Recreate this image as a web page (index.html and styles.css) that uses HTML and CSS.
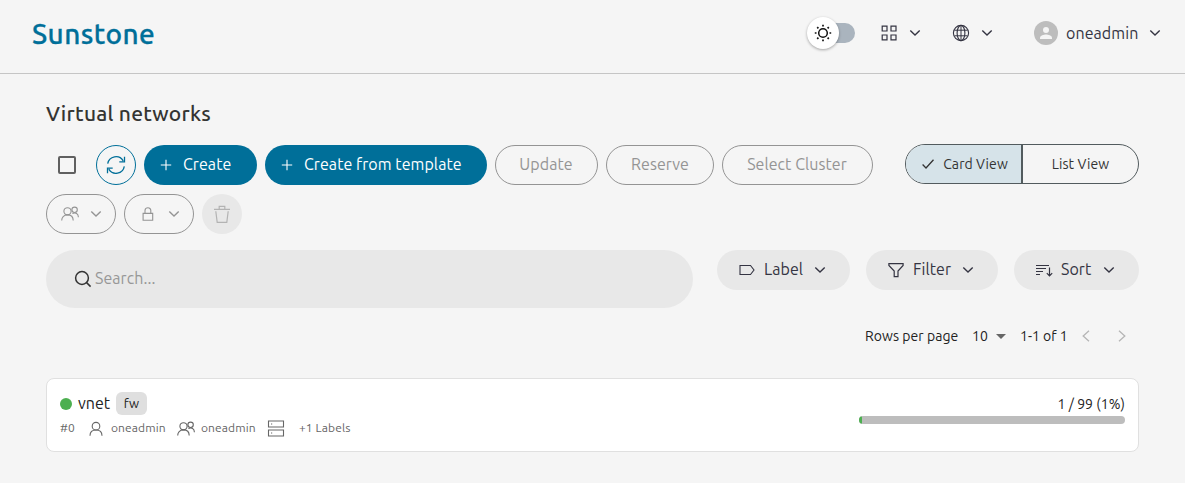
FILE: index.html
```html
<!DOCTYPE html>
<html lang="en">
<head>
<meta charset="utf-8">
<title>Sunstone</title>
<link rel="stylesheet" href="styles.css">
</head>
<body>
<svg class="defs" width="0" height="0">
  <symbol id="chevron" viewBox="0 0 12 12"><path d="M1.3 3.6 L6 8.1 L10.7 3.6" stroke-width="1.4"/></symbol>
  <symbol id="plus" viewBox="0 0 12 12"><path d="M6 .8V11.2M.8 6H11.2"/></symbol>
  <symbol id="group" viewBox="0 0 18 16"><circle cx="6.5" cy="5.3" r="3.6"/><path d="M.7 14.6C.7 11.3 2.7 8.9 6.5 8.9S12.2 11.3 12.2 14.6"/><circle cx="13.6" cy="3.8" r="2.7"/><path d="M11.4 7.5C14.7 5.9 17.4 7.7 17.4 11.2"/></symbol>
</svg>
<header class="topbar">
  <div class="logo">Sunstone</div>
  <div class="switch">
    <span class="knob"><svg width="18" height="18" viewBox="0 0 18 18"><circle cx="9" cy="9" r="4.3" stroke-width="1.5"/><path stroke-width="1.7" d="M9 .8v1.7M9 15.5v1.7M.8 9h1.7M15.5 9h1.7M3.2 3.2l1.2 1.2M13.6 13.6l1.2 1.2M3.2 14.8l1.2-1.2M13.6 4.4l1.2-1.2"/></svg></span>
  </div>
  <div class="menu menu-apps">
    <svg width="16" height="16" viewBox="0 0 16 16"><path stroke-width="1.2" d="M1.2 1.2h4.8v4.8h-4.8zM10 1.2h5v4.8h-5zM1.2 10h4.8v4.8h-4.8zM10 10h5v4.8h-5z"/></svg>
    <svg width="12" height="12"><use href="#chevron"/></svg>
  </div>
  <div class="menu menu-zone">
    <svg width="18" height="18" viewBox="0 0 18 18"><circle cx="9" cy="9" r="7.6"/><ellipse cx="9" cy="9" rx="3.9" ry="7.6"/><path stroke-width="1" d="M9 1.4V16.6M2.4 6.2H15.6M2.4 11.8H15.6"/></svg>
    <svg width="12" height="12"><use href="#chevron"/></svg>
  </div>
  <div class="menu menu-user">
    <svg class="avatar" width="24" height="24" viewBox="0 0 24 24"><circle cx="12" cy="12" r="12" fill="#bdbdbd"/><circle cx="12" cy="9" r="3" fill="#f5f5f5"/><path fill="#f5f5f5" d="M6 18v-1.5c0-2 4-3.1 6-3.1s6 1.1 6 3.1V18z"/></svg>
    <span class="user-name">oneadmin</span>
    <svg width="12" height="12"><use href="#chevron"/></svg>
  </div>
</header>
<main>
  <h1>Virtual networks</h1>
  <div class="toolbar">
    <div class="actions">
      <span class="check-wrap"><span class="checkbox"></span></span>
      <button class="btn refresh"><svg width="20" height="20" viewBox="0 0 20 20"><path stroke-width="1.3" d="M1.7 8.6A8.4 8.4 0 0 1 17.2 5.8M18.5 1.7V6.8H13.3M18.3 11.4A8.4 8.4 0 0 1 2.8 14.2M1.5 18.3V13.2H6.7"/></svg></button>
      <button class="btn primary create"><svg width="12" height="12"><use href="#plus"/></svg><span>Create</span></button>
      <button class="btn primary template"><svg width="12" height="12"><use href="#plus"/></svg><span>Create from template</span></button>
      <button class="btn outline update"><span>Update</span></button>
      <button class="btn outline reserve"><span>Reserve</span></button>
      <button class="btn outline cluster"><span>Select Cluster</span></button>
      <button class="btn outline drop"><svg width="18" height="16"><use href="#group"/></svg><svg width="12" height="12"><use href="#chevron"/></svg></button>
      <button class="btn outline drop"><svg width="18" height="16" viewBox="0 0 18 16"><path d="M4.1 7.4h9.6v6.8H4.1zM6 7.4V4.6C6 .8 11.8.8 11.8 4.6V7.4"/></svg><svg width="12" height="12"><use href="#chevron"/></svg></button>
      <button class="btn trash"><svg width="18" height="20" viewBox="0 0 18 20"><path stroke-width="1.2" d="M1 5.3H17M6.2 5.1V2.3H11.8V5.1M2.8 7.2L4.2 18.4H13.8L15.2 7.2"/></svg></button>
    </div>
    <div class="views">
      <div class="view active"><svg width="14" height="12" viewBox="0 0 14 12"><path stroke-width="1.3" d="M1.6 6.5L5 10L12.5 1.8"/></svg><span class="card-view">Card View</span></div>
      <div class="view"><span class="list-view">List View</span></div>
    </div>
  </div>
  <div class="filters">
    <div class="search"><svg width="18" height="18" viewBox="0 0 18 18"><circle cx="8" cy="8" r="6.4" stroke-width="1.5"/><path stroke-width="1.5" d="M12.6 12.6L16.6 16.6"/></svg><span class="placeholder">Search...</span></div>
    <button class="btn soft label"><svg width="16" height="16" viewBox="0 0 16 16"><path stroke-width="1.1" d="M1 3.5H11.5L15 8L11.5 12.5H1z"/></svg><span>Label</span><svg width="12" height="12"><use href="#chevron"/></svg></button>
    <button class="btn soft filter"><svg width="16" height="16" viewBox="0 0 16 16"><path stroke-width="1.2" d="M.9 1.6H15.1V3.5L10 9V14.6H6.2V9L.9 3.5z"/></svg><span>Filter</span><svg width="12" height="12"><use href="#chevron"/></svg></button>
    <button class="btn soft sort"><svg width="18" height="16" viewBox="0 0 18 16"><path stroke-width="1.2" d="M0 3.5H13M0 6.5H10M0 9.5H7M0 12.5H4M13.5 5.5V13.8M10.8 11.2L13.5 13.9L16.2 11.2"/></svg><span>Sort</span><svg width="12" height="12"><use href="#chevron"/></svg></button>
  </div>
  <div class="pager">
    <span class="rows-label">Rows per page</span>
    <span class="rows-count">10</span>
    <svg class="caret" width="10" height="5" viewBox="0 0 10 5"><path d="M0 0H10L5 5z"/></svg>
    <span class="range">1-1 of 1</span>
    <svg class="arrow" width="8" height="12" viewBox="0 0 8 12"><path d="M7 .8L1.2 6L7 11.2"/></svg>
    <svg class="arrow next" width="8" height="12" viewBox="0 0 8 12"><path d="M1 .8L6.8 6L1 11.2"/></svg>
  </div>
  <article class="card">
    <div class="info">
      <div class="name-row"><span class="dot"></span><span class="name">vnet</span><span class="tag"><span>fw</span></span></div>
      <div class="meta">
        <span class="id">#0</span>
        <svg class="user" width="14" height="16" viewBox="0 0 14 16"><circle cx="7" cy="5.2" r="3.8"/><path d="M1 14.8C1 11.4 3.2 9 7 9S13 11.4 13 14.8"/></svg>
        <span class="owner">oneadmin</span>
        <svg class="people" width="18" height="16"><use href="#group"/></svg>
        <span class="owner">oneadmin</span>
        <svg class="server" width="18" height="17" viewBox="0 0 18 17"><path stroke-width="1.1" d="M1.5 1H16.5V7H1.5zM1.5 10H16.5V16H1.5zM4 4H5.2M4 13H5.2"/></svg>
        <span class="labels">+1 Labels</span>
      </div>
    </div>
    <div class="usage">
      <span class="usage-text">1 / 99 (1%)</span>
      <div class="bar"><div class="fill" style="width:1.01%"></div></div>
    </div>
  </article>
</main>
</body>
</html>
```
FILE: styles.css
```css
* { box-sizing: border-box; }
body { margin: 0; background: #f5f5f5; color: #222; font-family: Ubuntu, "Noto Sans", sans-serif; font-size: 16px; white-space: nowrap; }
svg { display: block; flex: none; fill: none; stroke: currentColor; stroke-width: 1.1; }
.defs { position: absolute; }
.topbar { display: flex; align-items: center; height: 74px; padding: 0 24px 7px 32px; border-bottom: 1px solid #c5c5c5; color: #343442; }
.logo { width: 775px; padding-top: 1px; color: #006f99; font-size: 28px; font-weight: 500; line-height: 40px; letter-spacing: .4px; -webkit-text-stroke: .3px #006f99; }
.switch { width: 48px; height: 32px; padding: 6px 0 6px 8px; position: relative; }
.switch::before { content: ""; display: block; height: 20px; border-radius: 10px; background: #aab4be; }
.knob { position: absolute; left: 0; top: 0; width: 32px; height: 32px; border-radius: 50%; background: #fff; color: #111; display: grid; place-items: center; box-shadow: 0 1px 3px #0005; }
.menu { display: flex; align-items: center; }
.menu-apps { margin-left: 26px; gap: 12px; }
.menu-zone { margin-left: 31px; gap: 11px; }
.menu-user { margin-left: 41px; }
.avatar { stroke: none; }
.user-name { width: 75px; margin: 0 8px; letter-spacing: .08px; }
main { padding: 23px 46px 0; }
h1 { margin: 0; font-size: 21px; font-weight: 500; line-height: 32px; letter-spacing: .25px; color: #343432; }
.toolbar { display: flex; justify-content: space-between; margin-top: 15px; }
.actions { display: flex; flex-wrap: wrap; gap: 9px 8px; width: 835px; padding-top: 1px; }
.btn { display: flex; align-items: center; height: 40px; padding: 0; border: 0; border-radius: 20px; font: inherit; background: none; }
.btn span { padding-bottom: 2px; letter-spacing: .06px; }
.check-wrap { width: 42px; height: 40px; display: grid; place-items: center; }
.checkbox { width: 18px; height: 18px; border: 2px solid #606060; border-radius: 2px; }
.refresh { width: 40px; justify-content: center; border: 1px solid #006f99; color: #006f99; }
.primary { background: #006f99; color: #fff; padding-left: 16px; gap: 11px; }
.create { width: 113px; }
.template { width: 222px; }
.outline { border: 1px solid #949494; color: #949494; justify-content: center; }
.update { width: 103px; }
.reserve { width: 108px; }
.cluster { width: 151px; }
.update span, .cluster span { margin-right: 1px; }
.drop { width: 70px; gap: 11px; }
.trash { width: 40px; justify-content: center; background: #e8e8e8; color: #b3b3b3; }
.views { display: flex; width: 234px; height: 40px; border: 1px solid #525b5e; border-radius: 20px; overflow: hidden; font-size: 14px; letter-spacing: .1px; color: #333; }
.view { flex: 1; display: flex; align-items: center; justify-content: center; gap: 8px; }
.active { flex: none; width: 117px; background: #d6e3e9; border-right: 2px solid #525b5e; padding-left: 2px; }
.filters { display: flex; margin-top: 16px; }
.search { display: flex; align-items: center; width: 647px; height: 58px; padding-left: 28px; gap: 3px; margin-right: 24px; border-radius: 29px; background: #e8e8e8; color: #333; }
.placeholder { padding-bottom: 2px; color: #979797; letter-spacing: .06px; }
.soft { background: #e8e8e8; color: #343442; padding: 0 24px 0 22px; }
.soft span { flex: 1; text-align: left; padding-left: 9px; }
.label { width: 133px; margin-right: 16px; }
.filter { width: 132px; margin-right: 16px; }
.sort { width: 125px; }
.soft.sort span { padding-left: 7px; }
.pager { display: flex; align-items: center; justify-content: flex-end; height: 24px; margin-top: 16px; padding-right: 13px; font-size: 14px; }
.rows-label { width: 93px; letter-spacing: .05px; }
.rows-count { width: 17px; margin-left: 14px; }
.caret { margin-left: 7px; fill: #666; stroke: none; }
.range { width: 48px; margin-left: 14px; }
.arrow { margin-left: 14px; color: #b5b5b5; stroke-width: 1.3; }
.next { margin-left: 28px; }
.card { display: flex; justify-content: space-between; height: 74px; margin-top: 30px; padding: 13px; border: 1px solid #e0e0e0; border-radius: 8px; background: #fff; }
.name-row { display: flex; align-items: center; height: 24px; }
.dot { width: 12px; height: 12px; border-radius: 50%; background: #4caf50; }
.name { width: 32px; margin: 0 6px; padding-bottom: 2px; }
.tag { width: 31px; height: 23px; margin-bottom: 1px; padding-bottom: 1px; border-radius: 6px; background: #dfdfdf; font-size: 13px; display: grid; place-items: center; }
.meta { display: flex; align-items: center; height: 24px; padding-top: 1px; color: #666; font-size: 12px; letter-spacing: .1px; }
.meta span { padding-bottom: 2px; }
.id { width: 15px; }
.user { margin: 0 8px 0 14px; }
.owner { width: 55px; }
.people { margin: 0 6px 0 11px; }
.server { margin: 0 14px 0 11px; }
.usage { width: 266px; }
.usage-text { display: block; text-align: right; height: 24px; line-height: 24px; font-size: 14px; letter-spacing: .05px; }
.bar { height: 8px; border-radius: 4px; background: #bdbdbd; overflow: hidden; }
.fill { height: 8px; border-radius: 4px; background: #4caf50; }
```
